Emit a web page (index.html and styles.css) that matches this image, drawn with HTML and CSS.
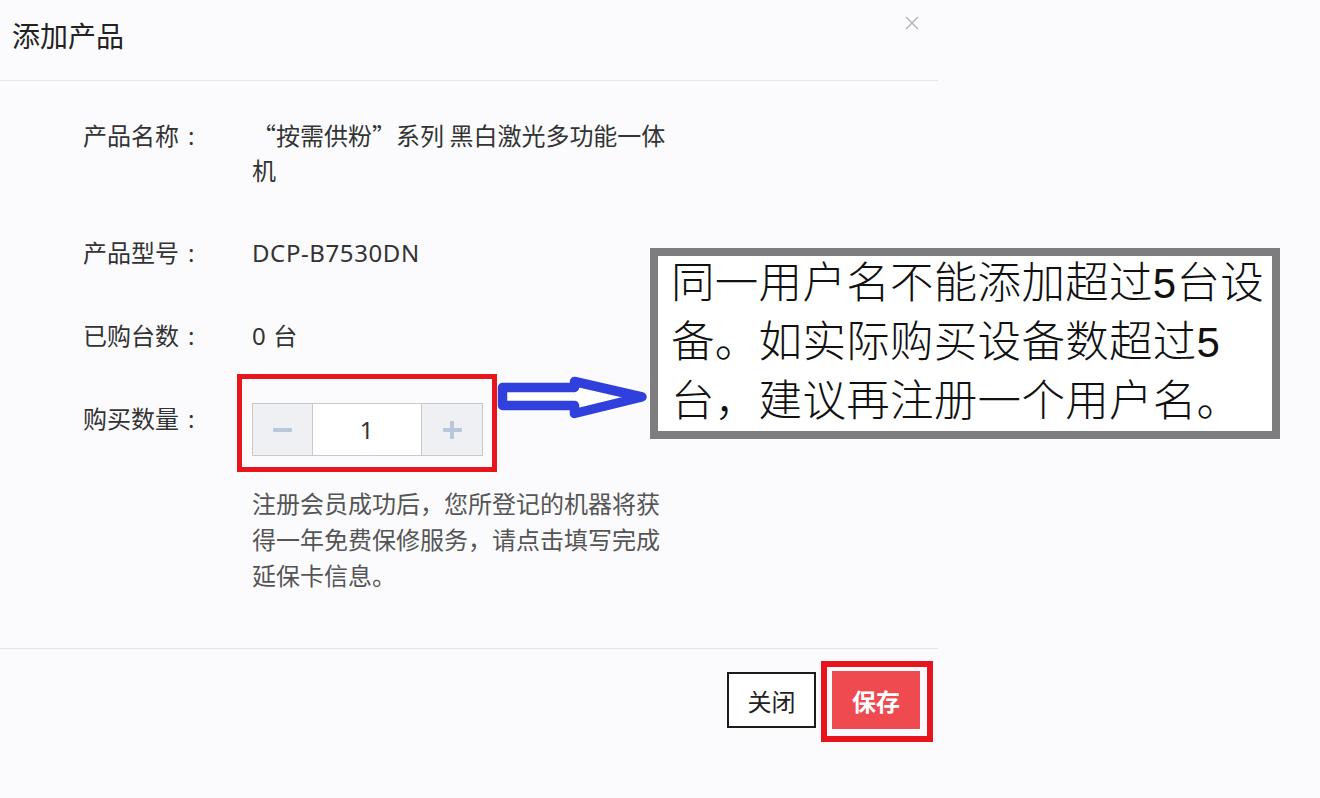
FILE: index.html
```html
<!DOCTYPE html>
<html lang="zh-CN">
<head>
<meta charset="utf-8">
<title>添加产品</title>
<link rel="stylesheet" href="styles.css">
</head>
<body>
<div class="page">
  <div class="dialog">
    <header class="dlg-head">
      <h1 class="dlg-title">添加产品</h1>
      <button class="dlg-x" aria-label="关闭">
        <svg width="14" height="14" viewBox="0 0 14 14"><path d="M1 1L13 13M13 1L1 13" stroke="#aeaeb2" stroke-width="1.2" fill="none"/></svg>
      </button>
    </header>
    <div class="dlg-body">
      <div class="row">
        <div class="label">产品名称<span class="colon">:</span></div>
        <div class="value">“按需供粉”系列 黑白激光多功能一体机</div>
      </div>
      <div class="row">
        <div class="label">产品型号<span class="colon">:</span></div>
        <div class="value"><span class="latin">DCP-B7530DN</span></div>
      </div>
      <div class="row">
        <div class="label">已购台数<span class="colon">:</span></div>
        <div class="value"><span class="latin">0 </span>台</div>
      </div>
      <div class="row last">
        <div class="label">购买数量<span class="colon">:</span></div>
        <div class="value">
          <div class="stepper">
            <button class="step-btn" aria-label="减少"><span class="bar-h"></span></button>
            <div class="step-input latin">1</div>
            <button class="step-btn" aria-label="增加"><span class="bar-h"></span><span class="bar-v"></span></button>
          </div>
          <p class="tip">注册会员成功后，您所登记的机器将获得一年免费保修服务，请点击填写完成延保卡信息。</p>
        </div>
      </div>
    </div>
    <footer class="dlg-foot">
      <button class="btn btn-close">关闭</button>
      <button class="btn btn-save">保存</button>
    </footer>
  </div>

  <svg class="arrow" width="170" height="56" viewBox="0 0 170 56">
    <polygon points="12.5,17.5 84.5,17.5 84.5,11.5 152,27 84.5,43.5 84.5,35.5 12.5,35.5" fill="#ffffff" stroke="#2f40dc" stroke-width="9.5" stroke-linejoin="round"/>
  </svg>
  <div class="note"><div class="note-text">同一用户名不能添加超过<span class="digit">5</span>台设<br>备。如实际购买设备数超过<span class="digit">5</span><br>台，建议再注册一个用户名。</div></div>
</div>
</body>
</html>
```

FILE: styles.css
```css
* { box-sizing: border-box; }
html, body { margin: 0; padding: 0; }
body {
  background: #fbfbfd;
  font-family: "Noto Sans CJK SC", "Noto Sans", sans-serif;
  color: #333;
  width: 1320px;
  height: 798px;
  overflow: hidden;
}
.page { position: relative; width: 1320px; height: 798px; }

.dialog { width: 938px; }

.dlg-head {
  height: 81px;
  border-bottom: 1px solid #e7e7eb;
  display: flex;
  justify-content: space-between;
  align-items: center;
  padding: 0 19px 0 12px;
}
.dlg-title {
  margin: 0;
  font-size: 28px;
  font-weight: 400;
  color: #222;
  line-height: 1;
  margin-top: -10px;
}
.dlg-x {
  align-self: flex-start;
  margin-top: 16px;
  border: 0;
  background: none;
  padding: 0;
  width: 14px;
  height: 14px;
  display: block;
}
.dlg-x svg { display: block; }

.dlg-body { padding: 36px 0 55px 83px; }

.row {
  display: flex;
  align-items: flex-start;
  margin-bottom: 47px;
  font-size: 24px;
  line-height: 35px;
}
.row.last { margin-bottom: 0; }
.label { width: 169px; flex: none; color: #333; }
.value { width: 425px; color: #333; }
.latin { font-family: "Noto Sans", "Noto Sans CJK SC", sans-serif; letter-spacing: 0.6px; }
.colon { font-family: "Noto Sans", sans-serif; margin-left: 9px; }

.stepper {
  position: relative;
  margin-top: 3px;
  display: flex;
  width: 231px;
  height: 53px;
  border: 1px solid #c9c9cc;
}
.stepper::before {
  content: "";
  position: absolute;
  left: -16px; right: -15px; top: -30px; bottom: -17px;
  border: 5.5px solid #e8161c;
  pointer-events: none;
}
.step-btn {
  position: relative;
  width: 60px;
  flex: none;
  border: 0;
  background: #eef0f3;
  padding: 0;
}
.step-btn:last-child { width: 61px; border-left: 1px solid #c9c9cc; }
.step-btn:first-child { border-right: 1px solid #c9c9cc; }
.bar-h {
  position: absolute;
  left: 50%; top: 50%;
  width: 19px; height: 4px;
  margin: -2px 0 0 -9.5px;
  background: #b9c7da;
  border-radius: 1px;
}
.bar-v {
  position: absolute;
  left: 50%; top: 50%;
  width: 4px; height: 18px;
  margin: -9px 0 0 -2px;
  background: #b9c7da;
  border-radius: 1px;
}
.step-input {
  flex: 1;
  display: flex;
  align-items: center;
  justify-content: center;
  background: #fff;
  font-size: 24px;
  color: #333;
}

.tip {
  margin: 29px 0 0;
  width: 420px;
  font-size: 24px;
  line-height: 36px;
  color: #555;
}

.dlg-foot {
  border-top: 1px solid #e5e5e9;
  display: flex;
  justify-content: flex-end;
  align-items: center;
  gap: 16px;
  padding: 22px 18px 0 0;
}
.btn {
  font-family: "Noto Sans CJK SC", sans-serif;
  font-size: 24px;
  padding: 0;
  cursor: pointer;
}
.btn-close {
  width: 89px;
  height: 56px;
  background: #fff;
  border: 2px solid #1c1c1c;
  color: #222;
}
.btn-save {
  position: relative;
  width: 88px;
  height: 58px;
  background: #ee4a50;
  border: 0;
  color: #fff;
  font-weight: 700;
}
.btn-save::after {
  content: "";
  position: absolute;
  left: -11px; right: -13px; top: -10px; bottom: -13px;
  border: 6px solid #e8161c;
  pointer-events: none;
}

.arrow {
  position: absolute;
  left: 490px;
  top: 370px;
}
.note {
  position: absolute;
  left: 650px;
  top: 248px;
  width: 630px;
  height: 191px;
  border: 8px solid #7d7d7f;
  background: #fff;
  padding: 0 0 0 13px;
  font-family: "Noto Sans CJK SC", sans-serif;
  white-space: nowrap;
}
.note-text {
  margin-top: -4px;
  font-size: 43.5px;
  font-weight: 300;
  line-height: 55px;
  color: #111;
  letter-spacing: 0.3px;
}
.digit { font-family: "Liberation Sans", sans-serif; font-weight: 400; font-size: 42px; }
```
